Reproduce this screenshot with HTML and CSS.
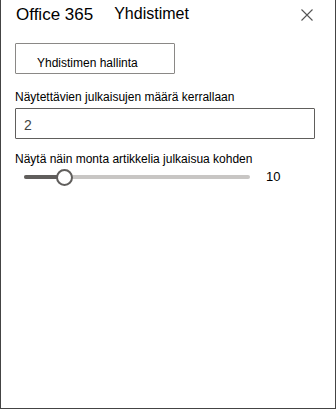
FILE: index.html
```html
<!DOCTYPE html>
<html lang="fi">
<head>
<meta charset="utf-8">
<title>Yhdistimet</title>
<link rel="stylesheet" href="styles.css">
</head>
<body>
<div class="panel">
  <header class="header">
    <span class="brand">Office 365</span>
    <h1 class="title">Yhdistimet</h1>
    <button class="close" aria-label="Sulje">
      <svg width="12" height="12" viewBox="0 0 12 12"><path d="M0.5 0.5 L11.5 11.5 M11.5 0.5 L0.5 11.5" stroke="#555" stroke-width="1.1" fill="none"/></svg>
    </button>
  </header>
  <div class="content">
    <button class="manage">Yhdistimen hallinta</button>
    <label class="label label-first">Näytettävien julkaisujen määrä kerrallaan</label>
    <div class="input">2</div>
    <label class="label label-second">Näytä näin monta artikkelia julkaisua kohden</label>
    <div class="slider-row">
      <div class="slider">
        <div class="track"></div>
        <div class="fill" style="width: 18%"></div>
        <div class="thumb" style="left: 18%"></div>
      </div>
      <span class="value">10</span>
    </div>
  </div>
</div>
</body>
</html>
```
FILE: styles.css
```css
html, body {
  margin: 0;
  padding: 0;
  background: #fff;
}
.panel {
  box-sizing: border-box;
  width: 336px;
  height: 409px;
  border: 1px solid #444;
  border-top: none;
  font-family: "Liberation Sans", Arial, sans-serif;
  color: #201f1e;
}
.header {
  display: flex;
  align-items: flex-start;
  height: 43px;
  padding-left: 15px;
}
.brand {
  font-size: 17px;
  line-height: 20px;
  margin-top: 5px;
  color: #000;
}
.title {
  margin: 3.5px 0 0 21px;
  font-size: 16px;
  line-height: 20px;
  font-weight: normal;
  color: #000;
}
.close {
  margin: 9px 22px 0 auto;
  padding: 0;
  border: none;
  background: none;
  width: 12px;
  height: 12px;
  display: block;
}
.close svg {
  display: block;
}
.content {
  padding: 0 14px;
}
.manage {
  display: block;
  box-sizing: border-box;
  width: 160px;
  height: 31px;
  border: 1px solid #8a8886;
  border-radius: 1px;
  background: #fff;
  padding: 8px 0 0 21px;
  margin: 0;
  text-align: left;
  font-family: "Liberation Sans", Arial, sans-serif;
  font-size: 12px;
  line-height: 16px;
  color: #000;
}
.label {
  display: block;
  font-size: 12px;
  line-height: 16px;
  color: #000;
}
.label-first {
  margin-top: 14.5px;
}
.input {
  box-sizing: border-box;
  width: 300px;
  height: 31px;
  margin-top: 3.5px;
  border: 1px solid #605e5c;
  border-radius: 1px;
  padding: 6px 8px 0;
  font-size: 14px;
  line-height: 20px;
  color: #444;
}
.label-second {
  margin-top: 12px;
}
.slider-row {
  display: flex;
  align-items: center;
  height: 20px;
}
.slider {
  position: relative;
  width: 226px;
  height: 4px;
  margin-left: 9px;
}
.track {
  height: 4px;
  border-radius: 2px;
  background: #c8c6c4;
}
.fill {
  position: absolute;
  left: 0;
  top: 0;
  height: 4px;
  border-radius: 2px 0 0 2px;
  background: #605e5c;
}
.thumb {
  position: absolute;
  top: -6.5px;
  width: 17px;
  height: 17px;
  margin-left: -8.5px;
  box-sizing: border-box;
  border: 2px solid #605e5c;
  border-radius: 50%;
  background: #fff;
}
.value {
  margin-left: 16px;
  font-size: 13px;
  line-height: 20px;
  color: #000;
}
```
